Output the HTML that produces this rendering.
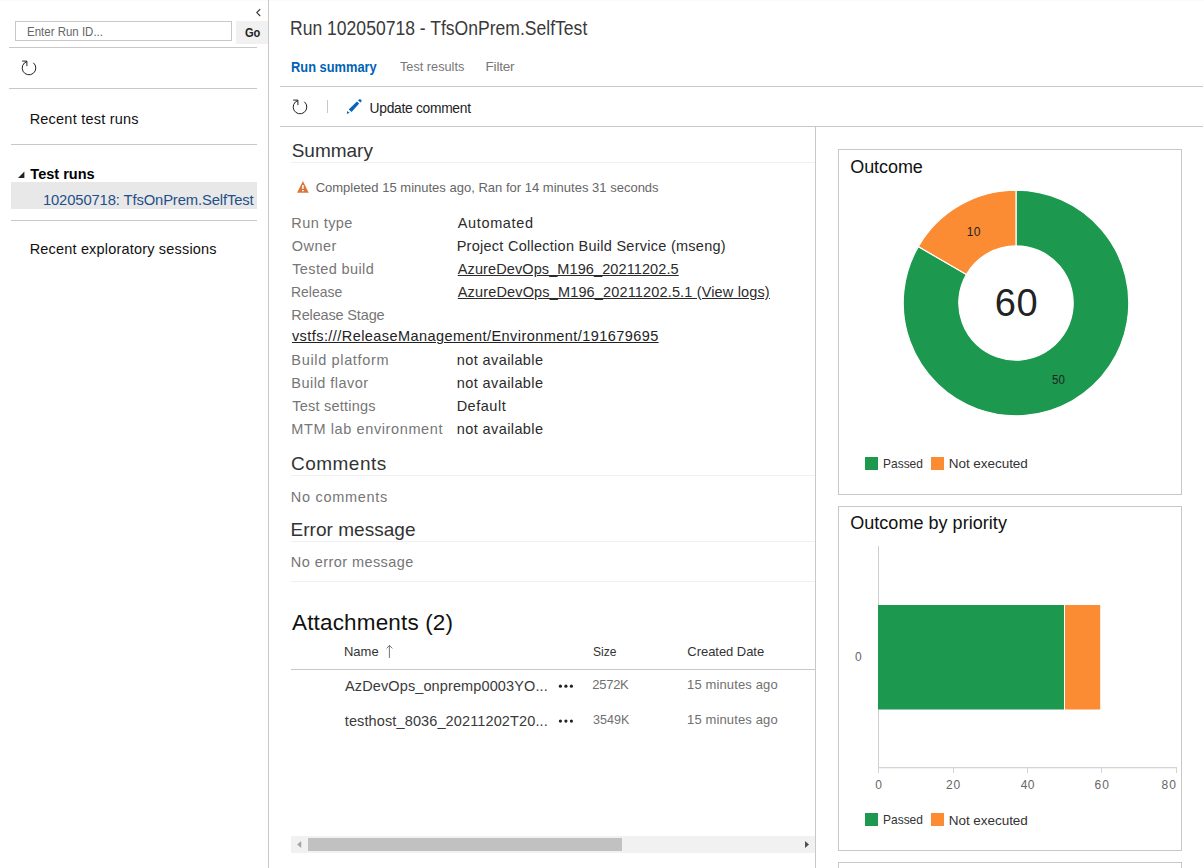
<!DOCTYPE html>
<html><head><meta charset="utf-8"><style>
html,body{margin:0;padding:0;background:#fff;width:1204px;height:868px;overflow:hidden;position:relative;font-family:"Liberation Sans",sans-serif;}
.t{position:absolute;white-space:nowrap;line-height:1;z-index:2;}
.r{position:absolute;}
svg{position:absolute;z-index:1;}
</style></head><body>
<svg style="left:250px;top:4px" width="16" height="16" viewBox="0 0 16 16"><polyline points="10.2,5.2 6.8,8.6 10.2,12" fill="none" stroke="#333" stroke-width="1.1"/></svg>
<svg style="left:20.7px;top:59.9px" width="16" height="16" viewBox="0 0 16 16"><path d="M6.01,1.50 A6.8,6.8 0 1 0 12.37,2.79" fill="none" stroke="#222" stroke-width="1.0"/><path d="M1.2,1.1 H5.9 V6.1" fill="none" stroke="#222" stroke-width="1.0"/></svg>
<svg style="left:292.0px;top:98.8px" width="16" height="16" viewBox="0 0 16 16"><path d="M6.01,1.50 A6.8,6.8 0 1 0 12.37,2.79" fill="none" stroke="#222" stroke-width="1.0"/><path d="M1.2,1.1 H5.9 V6.1" fill="none" stroke="#222" stroke-width="1.0"/></svg>
<svg style="left:340px;top:94px" width="30" height="25" viewBox="0 0 30 25"><g fill="#0a64b8"><polygon points="6.9,19.9 7.1,16.9 9.6,18.8"/><polygon points="8.7,15.6 11.6,17.9 19.2,9.4 16.9,7.4"/><polygon points="18.0,6.4 20.5,8.6 21.6,7.2 21.4,6.1 20.4,5.2 19.3,5.2"/></g></svg>
<svg style="left:292px;top:176px" width="24" height="22" viewBox="0 0 24 22"><polygon points="10.9,4.9 5.1,16.7 16.7,16.7" fill="#d8773a"/><rect x="10.1" y="9" width="1.6" height="3.8" fill="#fff"/><rect x="10.1" y="14" width="1.6" height="1.3" fill="#fff"/></svg>
<svg style="left:16px;top:169px" width="10" height="10" viewBox="0 0 10 10"><polygon points="2,9 8.4,9 8.4,2.6" fill="#222"/></svg>
<svg style="left:555px;top:681px" width="22" height="10" viewBox="0 0 22 10"><circle cx="5.399999999999977" cy="5.2000000000000455" r="1.6" fill="#222"/><circle cx="10.899999999999977" cy="5.2000000000000455" r="1.6" fill="#222"/><circle cx="16.399999999999977" cy="5.2000000000000455" r="1.6" fill="#222"/></svg>
<svg style="left:555px;top:716px" width="22" height="10" viewBox="0 0 22 10"><circle cx="5.399999999999977" cy="5.100000000000023" r="1.6" fill="#222"/><circle cx="10.899999999999977" cy="5.100000000000023" r="1.6" fill="#222"/><circle cx="16.399999999999977" cy="5.100000000000023" r="1.6" fill="#222"/></svg>
<svg style="left:383px;top:642px" width="12" height="18" viewBox="0 0 12 18"><path d="M6.4,3.2 V16" stroke="#666" stroke-width="0.9" fill="none"/><polyline points="3.6,6.4 6.4,3.4 9.4,6.4" stroke="#666" stroke-width="0.9" fill="none"/></svg>
<svg style="left:291px;top:836px" width="17" height="17" viewBox="0 0 17 17"><polygon points="10.2,5 10.2,12 6.2,8.5" fill="#a3a3a3"/></svg>
<svg style="left:798px;top:836px" width="17" height="17" viewBox="0 0 17 17"><polygon points="7,5 7,12 11,8.5" fill="#505050"/></svg>
<svg style="left:896.2px;top:183.1px" width="240" height="240" viewBox="0 0 240 240"><path d="M120.000,7.200 A112.8,112.8 0 1 1 22.312,63.600 L70.463,91.400 A57.2,57.2 0 1 0 120.000,62.800 Z" fill="#1c994f" stroke="#fff" stroke-width="1.2"/><path d="M22.312,63.600 A112.8,112.8 0 0 1 120.000,7.200 L120.000,62.800 A57.2,57.2 0 0 0 70.463,91.400 Z" fill="#fb8c33" stroke="#fff" stroke-width="1.2"/></svg>
<svg style="left:878px;top:546px" width="1" height="221" viewBox="0 0 1 221"><rect x="0" y="0" width="1" height="221" fill="#cfcfcf"/></svg>
<svg style="left:878px;top:767px" width="300" height="7" viewBox="0 0 300 7"><rect x="0" y="0" width="299" height="1.3" fill="#d4d4d4"/><rect x="0" y="0" width="1" height="6" fill="#d4d4d4"/><rect x="75" y="0" width="1" height="6" fill="#d4d4d4"/><rect x="149" y="0" width="1" height="6" fill="#d4d4d4"/><rect x="223" y="0" width="1" height="6" fill="#d4d4d4"/><rect x="298" y="0" width="1" height="6" fill="#d4d4d4"/></svg>
<svg style="left:878px;top:605px" width="224" height="105" viewBox="0 0 224 105"><rect x="0" y="0" width="186" height="104.5" fill="#1c994f"/><rect x="187" y="0" width="35.2" height="104.5" fill="#fb8c33"/></svg>
<div class="r" style="left:0px;top:0px;width:1204px;height:1px;background:#fafafa"></div>
<div class="r" style="left:268px;top:0px;width:1px;height:868px;background:#c8c8c8"></div>
<div class="r" style="left:15px;top:21px;width:217px;height:20px;border:1px solid #c8c8c8;box-sizing:border-box"></div>
<div class="t" style="left:27.08px;top:25.96px;font-size:12.8px;color:#666;transform:scaleX(0.8977);transform-origin:0 0;">Enter Run ID...</div>
<div class="r" style="left:236px;top:21px;width:32px;height:23px;background:#f1f1f1"></div>
<div class="t" style="left:244.56px;top:26.00px;font-size:13px;color:#222;transform:scaleX(0.8514);transform-origin:0 0;font-weight:bold;">Go</div>
<div class="r" style="left:9px;top:47px;width:248px;height:1px;background:#c8c8c8"></div>
<div class="r" style="left:9px;top:88px;width:248px;height:1px;background:#c8c8c8"></div>
<div class="t" style="left:29.64px;top:111.73px;font-size:14.5px;color:#111;letter-spacing:0.221px;">Recent test runs</div>
<div class="r" style="left:11px;top:144px;width:246px;height:1px;background:#c8c8c8"></div>
<div class="t" style="left:30.36px;top:166.73px;font-size:14.5px;color:#000;letter-spacing:0.008px;font-weight:bold;">Test runs</div>
<div class="r" style="left:11px;top:182px;width:246px;height:27px;background:#e8e8e8"></div>
<div class="t" style="left:42.89px;top:192.67px;font-size:14.8px;color:#1f5089;letter-spacing:-0.128px;">102050718: TfsOnPrem.SelfTest</div>
<div class="r" style="left:11px;top:220px;width:246px;height:1px;background:#c8c8c8"></div>
<div class="t" style="left:29.64px;top:242.33px;font-size:14.5px;color:#111;letter-spacing:0.183px;">Recent exploratory sessions</div>
<div class="t" style="left:289.80px;top:17.77px;font-size:20px;color:#3a3a3a;transform:scaleX(0.8777);transform-origin:0 0;">Run 102050718 - TfsOnPrem.SelfTest</div>
<div class="t" style="left:291.36px;top:60.35px;font-size:14px;color:#0062b4;transform:scaleX(0.9184);transform-origin:0 0;font-weight:bold;">Run summary</div>
<div class="t" style="left:399.65px;top:60.47px;font-size:13.5px;color:#777;transform:scaleX(0.9422);transform-origin:0 0;">Test results</div>
<div class="t" style="left:485.62px;top:60.47px;font-size:13.5px;color:#777;letter-spacing:-0.237px;">Filter</div>
<div class="r" style="left:280px;top:86px;width:923px;height:1px;background:#c8c8c8"></div>
<div class="t" style="left:369.56px;top:101.62px;font-size:13.8px;color:#222;letter-spacing:-0.278px;">Update comment</div>
<div class="r" style="left:280px;top:126px;width:923px;height:1px;background:#c8c8c8"></div>
<div class="r" style="left:815px;top:126px;width:1px;height:742px;background:#c8c8c8"></div>
<div class="r" style="left:327px;top:100px;width:1px;height:13px;background:#c8c8c8"></div>
<div class="t" style="left:291.64px;top:140.52px;font-size:19px;color:#333;letter-spacing:0.006px;">Summary</div>
<div class="r" style="left:291px;top:162px;width:524px;height:1px;background:#f0f0f0"></div>
<div class="t" style="left:315.65px;top:181.00px;font-size:13px;color:#666;letter-spacing:0.008px;">Completed 15 minutes ago, Ran for 14 minutes 31 seconds</div>
<div class="t" style="left:291.34px;top:215.93px;font-size:14.5px;color:#767676;letter-spacing:0.430px;">Run type</div>
<div class="t" style="left:291.85px;top:238.93px;font-size:14.5px;color:#767676;letter-spacing:0.435px;">Owner</div>
<div class="t" style="left:292.21px;top:262.03px;font-size:14.5px;color:#767676;letter-spacing:0.380px;">Tested build</div>
<div class="t" style="left:291.39px;top:285.03px;font-size:14.5px;color:#767676;transform:scaleX(0.9610);transform-origin:0 0;">Release</div>
<div class="t" style="left:291.34px;top:308.13px;font-size:14.5px;color:#767676;letter-spacing:-0.151px;">Release Stage</div>
<div class="t" style="left:291.34px;top:353.03px;font-size:14.5px;color:#767676;letter-spacing:0.657px;">Build platform</div>
<div class="t" style="left:291.34px;top:376.03px;font-size:14.5px;color:#767676;letter-spacing:0.461px;">Build flavor</div>
<div class="t" style="left:292.21px;top:399.03px;font-size:14.5px;color:#767676;letter-spacing:0.223px;">Test settings</div>
<div class="t" style="left:291.34px;top:421.93px;font-size:14.5px;color:#767676;letter-spacing:0.605px;">MTM lab environment</div>
<div class="t" style="left:457.80px;top:215.93px;font-size:14.5px;color:#2b2b2b;letter-spacing:0.629px;">Automated</div>
<div class="t" style="left:456.64px;top:238.93px;font-size:14.5px;color:#2b2b2b;letter-spacing:0.265px;">Project Collection Build Service (mseng)</div>
<div class="t" style="left:457.80px;top:262.03px;font-size:14.5px;color:#2b2b2b;letter-spacing:0.101px;text-decoration:underline;">AzureDevOps_M196_20211202.5</div>
<div class="t" style="left:457.80px;top:285.03px;font-size:14.5px;color:#2b2b2b;letter-spacing:0.153px;text-decoration:underline;">AzureDevOps_M196_20211202.5.1 (View logs)</div>
<div class="t" style="left:456.86px;top:353.03px;font-size:14.5px;color:#2b2b2b;letter-spacing:0.390px;">not available</div>
<div class="t" style="left:456.86px;top:376.03px;font-size:14.5px;color:#2b2b2b;letter-spacing:0.390px;">not available</div>
<div class="t" style="left:456.64px;top:399.03px;font-size:14.5px;color:#2b2b2b;letter-spacing:0.523px;">Default</div>
<div class="t" style="left:456.86px;top:421.93px;font-size:14.5px;color:#2b2b2b;letter-spacing:0.390px;">not available</div>
<div class="t" style="left:291.93px;top:329.23px;font-size:14.5px;color:#222;letter-spacing:0.436px;text-decoration:underline;">vstfs:///ReleaseManagement/Environment/191679695</div>
<div class="t" style="left:291.05px;top:453.82px;font-size:19px;color:#333;letter-spacing:0.464px;">Comments</div>
<div class="r" style="left:291px;top:475px;width:524px;height:1px;background:#f0f0f0"></div>
<div class="t" style="left:290.84px;top:489.53px;font-size:14.5px;color:#767676;letter-spacing:0.690px;">No comments</div>
<div class="t" style="left:290.48px;top:519.82px;font-size:19px;color:#333;letter-spacing:0.036px;">Error message</div>
<div class="r" style="left:291px;top:541px;width:524px;height:1px;background:#f0f0f0"></div>
<div class="t" style="left:290.84px;top:555.33px;font-size:14.5px;color:#767676;letter-spacing:0.428px;">No error message</div>
<div class="r" style="left:291px;top:581px;width:524px;height:1px;background:#f0f0f0"></div>
<div class="t" style="left:292.00px;top:611.65px;font-size:22.5px;color:#111;letter-spacing:0.158px;">Attachments (2)</div>
<div class="t" style="left:343.96px;top:645.10px;font-size:13px;color:#333;letter-spacing:-0.007px;">Name</div>
<div class="t" style="left:592.76px;top:645.00px;font-size:13px;color:#333;transform:scaleX(0.9247);transform-origin:0 0;">Size</div>
<div class="t" style="left:687.35px;top:645.00px;font-size:13px;color:#333;letter-spacing:-0.050px;">Created Date</div>
<div class="r" style="left:291px;top:669px;width:524px;height:1px;background:#c8c8c8"></div>
<div class="t" style="left:345.00px;top:678.93px;font-size:14.5px;color:#3a3a3a;letter-spacing:0.118px;">AzDevOps_onpremp0003YO...</div>
<div class="t" style="left:344.78px;top:713.93px;font-size:14.5px;color:#3a3a3a;letter-spacing:0.121px;">testhost_8036_20211202T20...</div>
<div class="t" style="left:592.35px;top:678.40px;font-size:13px;color:#707070;letter-spacing:-0.297px;">2572K</div>
<div class="t" style="left:592.50px;top:713.20px;font-size:13px;color:#707070;transform:scaleX(0.9642);transform-origin:0 0;">3549K</div>
<div class="t" style="left:687.02px;top:678.40px;font-size:13px;color:#707070;letter-spacing:0.134px;">15 minutes ago</div>
<div class="t" style="left:687.02px;top:713.20px;font-size:13px;color:#707070;letter-spacing:0.134px;">15 minutes ago</div>
<div class="r" style="left:291px;top:836px;width:524px;height:17px;background:#f1f1f1"></div>
<div class="r" style="left:308px;top:838px;width:314px;height:13px;background:#c1c1c1"></div>
<div class="r" style="left:838px;top:149px;width:344px;height:346px;border:1px solid #c8c8c8;box-sizing:border-box"></div>
<div class="t" style="left:850.19px;top:157.56px;font-size:18px;color:#111;letter-spacing:-0.062px;">Outcome</div>
<div class="r" style="left:838px;top:506px;width:344px;height:345px;border:1px solid #c8c8c8;box-sizing:border-box"></div>
<div class="t" style="left:850.19px;top:514.16px;font-size:18px;color:#111;letter-spacing:0.036px;">Outcome by priority</div>
<div class="r" style="left:838px;top:862px;width:344px;height:20px;border:1px solid #c8c8c8;box-sizing:border-box"></div>
<div class="r" style="left:865px;top:457px;width:13px;height:13px;background:#1c994f"></div>
<div class="t" style="left:883.14px;top:458.06px;font-size:12.8px;color:#333;transform:scaleX(0.9355);transform-origin:0 0;">Passed</div>
<div class="r" style="left:931px;top:457px;width:13px;height:13px;background:#fb8c33"></div>
<div class="t" style="left:948.82px;top:457.47px;font-size:13.5px;color:#333;letter-spacing:-0.051px;">Not executed</div>
<div class="r" style="left:865px;top:813px;width:13px;height:13px;background:#1c994f"></div>
<div class="t" style="left:883.14px;top:814.16px;font-size:12.8px;color:#333;transform:scaleX(0.9355);transform-origin:0 0;">Passed</div>
<div class="r" style="left:931px;top:813px;width:13px;height:13px;background:#fb8c33"></div>
<div class="t" style="left:948.82px;top:813.57px;font-size:13.5px;color:#333;letter-spacing:-0.051px;">Not executed</div>
<div class="t" style="left:855.12px;top:650.84px;font-size:12px;color:#666;">0</div>
<div class="t" style="left:875.32px;top:778.84px;font-size:12px;color:#666;">0</div>
<div class="t" style="left:946.10px;top:778.84px;font-size:12px;color:#666;letter-spacing:0.800px;">20</div>
<div class="t" style="left:1020.76px;top:778.84px;font-size:12px;color:#666;letter-spacing:0.340px;">40</div>
<div class="t" style="left:1094.40px;top:778.84px;font-size:12px;color:#666;letter-spacing:1.200px;">60</div>
<div class="t" style="left:1161.46px;top:778.84px;font-size:12px;color:#666;letter-spacing:1.140px;">80</div>
<div class="t" style="left:994.70px;top:284.33px;font-size:38px;color:#222;letter-spacing:0.750px;">60</div>
<div class="t" style="left:966.70px;top:226.04px;font-size:12px;color:#222;letter-spacing:0.400px;">10</div>
<div class="t" style="left:1052.14px;top:373.84px;font-size:12px;color:#222;transform:scaleX(0.9581);transform-origin:0 0;">50</div>
</body></html>
